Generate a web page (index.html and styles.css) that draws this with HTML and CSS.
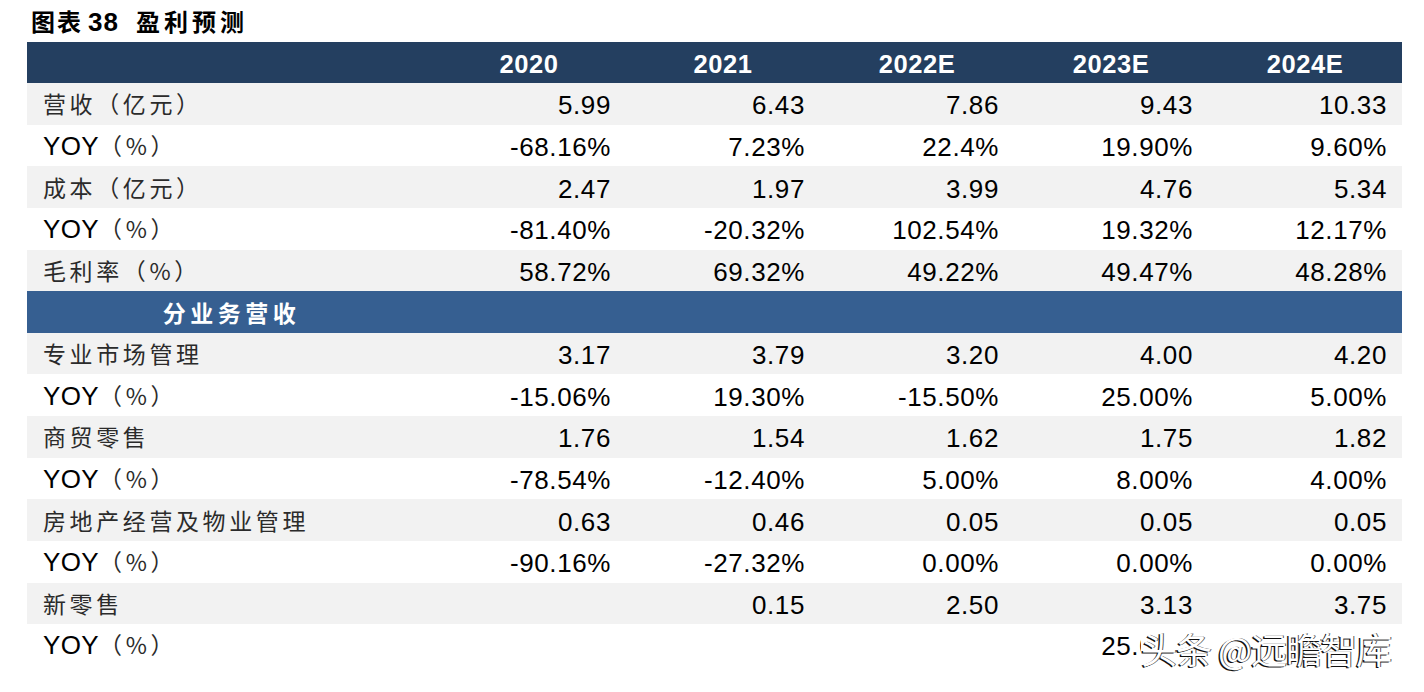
FILE: index.html
```html
<!DOCTYPE html>
<html lang="zh-CN">
<head>
<meta charset="utf-8">
<title>盈利预测</title>
<link rel="stylesheet" href="styles.css">
</head>
<body>
<div class="page">
  <h1 class="title"><span class="cjk first">图表</span><span class="num">38</span><span class="cjk second">盈利预测</span></h1>
  <div class="table">
    <div class="row head">
      <div class="cell label"></div>
      <div class="cell year">2020</div>
      <div class="cell year">2021</div>
      <div class="cell year">2022E</div>
      <div class="cell year">2023E</div>
      <div class="cell year">2024E</div>
    </div>
    <div class="row gray">
      <div class="cell label"><span class="cn">营收（亿元）</span></div>
      <div class="cell">5.99</div><div class="cell">6.43</div><div class="cell">7.86</div><div class="cell">9.43</div><div class="cell">10.33</div>
    </div>
    <div class="row">
      <div class="cell label"><span class="en">YOY</span><span class="cn">（%）</span></div>
      <div class="cell">-68.16%</div><div class="cell">7.23%</div><div class="cell">22.4%</div><div class="cell">19.90%</div><div class="cell">9.60%</div>
    </div>
    <div class="row gray">
      <div class="cell label"><span class="cn">成本（亿元）</span></div>
      <div class="cell">2.47</div><div class="cell">1.97</div><div class="cell">3.99</div><div class="cell">4.76</div><div class="cell">5.34</div>
    </div>
    <div class="row">
      <div class="cell label"><span class="en">YOY</span><span class="cn">（%）</span></div>
      <div class="cell">-81.40%</div><div class="cell">-20.32%</div><div class="cell">102.54%</div><div class="cell">19.32%</div><div class="cell">12.17%</div>
    </div>
    <div class="row gray">
      <div class="cell label"><span class="cn">毛利率（%）</span></div>
      <div class="cell">58.72%</div><div class="cell">69.32%</div><div class="cell">49.22%</div><div class="cell">49.47%</div><div class="cell">48.28%</div>
    </div>
    <div class="row section">
      <div class="cell label section-label">分业务营收</div>
      <div class="cell"></div><div class="cell"></div><div class="cell"></div><div class="cell"></div><div class="cell"></div>
    </div>
    <div class="row gray">
      <div class="cell label"><span class="cn">专业市场管理</span></div>
      <div class="cell">3.17</div><div class="cell">3.79</div><div class="cell">3.20</div><div class="cell">4.00</div><div class="cell">4.20</div>
    </div>
    <div class="row">
      <div class="cell label"><span class="en">YOY</span><span class="cn">（%）</span></div>
      <div class="cell">-15.06%</div><div class="cell">19.30%</div><div class="cell">-15.50%</div><div class="cell">25.00%</div><div class="cell">5.00%</div>
    </div>
    <div class="row gray">
      <div class="cell label"><span class="cn">商贸零售</span></div>
      <div class="cell">1.76</div><div class="cell">1.54</div><div class="cell">1.62</div><div class="cell">1.75</div><div class="cell">1.82</div>
    </div>
    <div class="row">
      <div class="cell label"><span class="en">YOY</span><span class="cn">（%）</span></div>
      <div class="cell">-78.54%</div><div class="cell">-12.40%</div><div class="cell">5.00%</div><div class="cell">8.00%</div><div class="cell">4.00%</div>
    </div>
    <div class="row gray">
      <div class="cell label"><span class="cn">房地产经营及物业管理</span></div>
      <div class="cell">0.63</div><div class="cell">0.46</div><div class="cell">0.05</div><div class="cell">0.05</div><div class="cell">0.05</div>
    </div>
    <div class="row">
      <div class="cell label"><span class="en">YOY</span><span class="cn">（%）</span></div>
      <div class="cell">-90.16%</div><div class="cell">-27.32%</div><div class="cell">0.00%</div><div class="cell">0.00%</div><div class="cell">0.00%</div>
    </div>
    <div class="row gray">
      <div class="cell label"><span class="cn">新零售</span></div>
      <div class="cell"></div><div class="cell">0.15</div><div class="cell">2.50</div><div class="cell">3.13</div><div class="cell">3.75</div>
    </div>
    <div class="row">
      <div class="cell label"><span class="en">YOY</span><span class="cn">（%）</span></div>
      <div class="cell"></div><div class="cell"></div><div class="cell"></div><div class="cell">25.00%</div><div class="cell"></div>
    </div>
  </div>
  <div class="watermark">头条 @远瞻智库</div>
</div>
</body>
</html>
```
FILE: styles.css
```css
html, body {
  margin: 0;
  padding: 0;
  background: #ffffff;
}
.page {
  position: relative;
  width: 1424px;
  height: 692px;
  overflow: hidden;
}
.title {
  display: flex;
  align-items: baseline;
  margin: 0;
  padding: 7px 0 0 31px;
  height: 42px;
  box-sizing: border-box;
  font-size: 24px;
  line-height: 28px;
  font-weight: bold;
  color: #000;
  white-space: nowrap;
}
.title .cjk {
  font-family: "Noto Sans CJK SC", sans-serif;
  letter-spacing: 2px;
}
.title .cjk.second {
  letter-spacing: 4px;
  margin-left: 17px;
}
.title .num {
  font-family: "Liberation Sans", Arial, sans-serif;
  font-size: 26px;
  letter-spacing: 1px;
  margin-left: 5px;
}
.table {
  margin-left: 27px;
  width: 1375px;
}
.row {
  display: grid;
  grid-template-columns: 405px repeat(5, 194px);
  height: 41.64px;
  align-items: center;
  background: #ffffff;
}
.row.gray {
  background: #f2f2f2;
}
.row.head {
  height: 41px;
  background: #243f60;
}
.row.section {
  background: #365f91;
}
.cell {
  font-family: "Liberation Sans", Arial, sans-serif;
  font-size: 26px;
  letter-spacing: 0.6px;
  color: #000;
  text-align: right;
  padding: 3px 15px 0 0;
  line-height: 36px;
  white-space: nowrap;
}
.cell.year {
  text-align: center;
  padding-right: 0;
  font-weight: bold;
  color: #ffffff;
  font-size: 25.5px;
}
.cell.label {
  text-align: left;
  padding: 0 0 0 16px;
}
.label .cn {
  font-family: "Noto Sans CJK SC", sans-serif;
  font-size: 23px;
  letter-spacing: 3.6px;
  color: #2b2b2b;
}
.label .en {
  font-family: "Liberation Sans", Arial, sans-serif;
  font-size: 26px;
  letter-spacing: 0.4px;
  color: #000;
}
.cell.section-label {
  text-align: center;
  padding: 0 0 0 4px;
  font-family: "Noto Sans CJK SC", sans-serif;
  font-weight: bold;
  font-size: 23px;
  letter-spacing: 4.5px;
  color: #ffffff;
}
.watermark {
  position: absolute;
  left: 1141px;
  top: 624px;
  padding: 0 4px 0 0;
  background: #ffffff;
  font-family: "Noto Sans CJK SC", sans-serif;
  font-size: 36px;
  line-height: 48px;
  letter-spacing: -1px;
  color: #ffffff;
  text-shadow: -1.5px 1px 0 #111, 1px -0.5px 0 #555;
  white-space: nowrap;
}
```
